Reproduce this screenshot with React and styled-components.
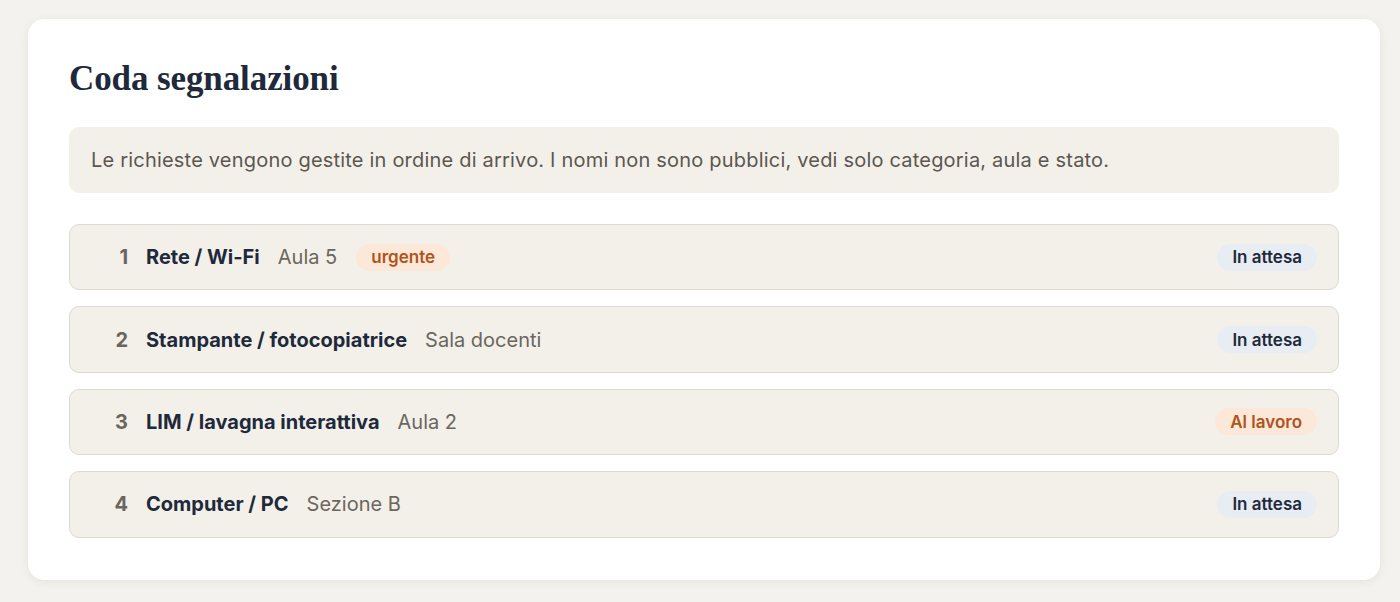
import React from "react";
import styled, { createGlobalStyle } from "styled-components";

const Global = createGlobalStyle`
  html, body { margin: 0; padding: 0; background: #f4f2ee; }
  body { font-family: Inter, "Noto Sans", sans-serif; -webkit-font-smoothing: antialiased; }
  * { box-sizing: border-box; }
`;

const Page = styled.div`
  padding: 19px 20px 22px 28px;
`;

const Card = styled.section`
  background: #ffffff;
  border-radius: 16px;
  box-shadow: 0 2px 10px rgba(60, 50, 30, 0.07), 0 0 1px rgba(60, 50, 30, 0.06);
  padding: 39px 41px 42px 41px;
  display: flex;
  flex-direction: column;
`;

const Title = styled.h2`
  margin: 0 0 27px;
  font-family: "Liberation Serif", "DejaVu Serif", serif;
  font-weight: 700;
  font-size: 35px;
  line-height: 42px;
  color: #1e2a3b;
  letter-spacing: -0.1px;
`;

const Note = styled.div`
  background: #f3f0ea;
  border-radius: 10px;
  padding: 20px 22px;
  font-size: 20px;
  line-height: 26px;
  letter-spacing: 0.2px;
  color: #5b5750;
  margin-bottom: 31px;
`;

const List = styled.ol`
  list-style: none;
  margin: 0;
  padding: 0;
  display: flex;
  flex-direction: column;
  gap: 16px;
`;

const Row = styled.li`
  display: flex;
  align-items: center;
  height: 66.4px;
  padding: 0 21px 0 22px;
  background: #f3f0ea;
  border: 1px solid #dedad2;
  border-radius: 10px;
`;

const Num = styled.span`
  width: 36px;
  text-align: right;
  font-weight: 700;
  font-size: 20px;
  color: #6b655c;
  margin-right: 18px;
`;

const Category = styled.span`
  font-weight: 700;
  font-size: 20px;
  color: #1e2a3b;
  margin-right: 18px;
`;

const Place = styled.span`
  font-size: 20px;
  color: #6b665e;
  margin-right: 19px;
`;

const Pill = styled.span`
  display: inline-flex;
  align-items: center;
  height: 27px;
  padding: 0 15px;
  border-radius: 999px;
  font-size: 17px;
  font-weight: 600;
  background: ${(p) => (p.$tone === "warm" ? "#fbe8d8" : "#e8ecf3")};
  color: ${(p) => (p.$tone === "warm" ? "#b0531c" : "#1e2a3b")};
`;

const Spacer = styled.span`
  flex: 1;
`;

const items = [
  { n: 1, cat: "Rete / Wi-Fi", place: "Aula 5", urgent: true, status: "In attesa" },
  { n: 2, cat: "Stampante / fotocopiatrice", place: "Sala docenti", status: "In attesa" },
  { n: 3, cat: "LIM / lavagna interattiva", place: "Aula 2", status: "Al lavoro" },
  { n: 4, cat: "Computer / PC", place: "Sezione B", status: "In attesa" },
];

export default function App() {
  return (
    <Page>
      <Global />
      <Card>
        <Title>Coda segnalazioni</Title>
        <Note>
          Le richieste vengono gestite in ordine di arrivo. I nomi non sono pubblici, vedi solo categoria, aula e stato.
        </Note>
        <List>
          {items.map((it) => (
            <Row key={it.n}>
              <Num>{it.n}</Num>
              <Category>{it.cat}</Category>
              <Place>{it.place}</Place>
              {it.urgent && <Pill $tone="warm">urgente</Pill>}
              <Spacer />
              <Pill $tone={it.status === "Al lavoro" ? "warm" : "cool"}>{it.status}</Pill>
            </Row>
          ))}
        </List>
      </Card>
    </Page>
  );
}
